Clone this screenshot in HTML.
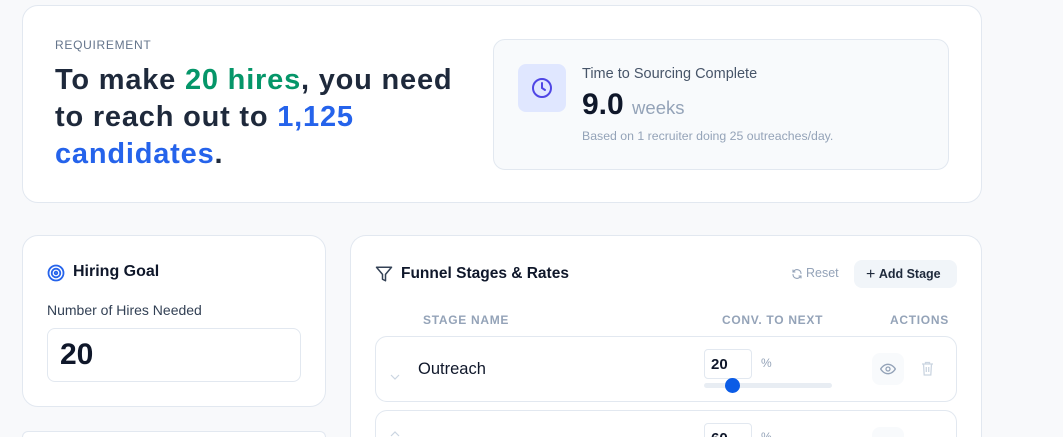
<!DOCTYPE html>
<html style="width:1063px;height:437px;overflow:hidden"><head><style>
*{box-sizing:border-box;margin:0;padding:0}
body{width:1063px;height:437px;overflow:hidden;background:#f8f9fb;font-family:"Liberation Sans",sans-serif;color:#0f172a;position:relative}
.card{position:absolute;background:#fff;border:1px solid #e2e8f0;border-radius:16px}
.abs{position:absolute;white-space:nowrap}
</style></head><body>
<div class="card" style="left:22px;top:5px;width:960px;height:198px"></div>
<div class="abs" style="left:55px;top:38px;font-size:12px;letter-spacing:0.7px;color:#64748b">REQUIREMENT</div>
<div class="abs" style="left:55px;top:62px;font-size:29px;letter-spacing:0.8px;font-weight:bold;line-height:37px;color:#1e293b">To make <span style="color:#059669">20 hires</span>, you need<br>to reach out to <span style="color:#2563eb">1,125</span><br><span style="color:#2563eb">candidates</span>.</div>
<div style="position:absolute;left:493px;top:39px;width:456px;height:131px;background:#f8fafc;border:1px solid #e2e8f0;border-radius:12px"></div>
<div style="position:absolute;left:518px;top:64px;width:48px;height:48px;background:#e0e7ff;border-radius:8px"></div>
<svg class="abs" style="left:530px;top:76px" width="24" height="24" viewBox="0 0 24 24" fill="none" stroke="#4f46e5" stroke-width="2" stroke-linecap="round"><circle cx="12" cy="12" r="9"/><path d="M12 7v5l3 2"/></svg>
<div class="abs" style="left:582px;top:66px;font-size:14.5px;color:#475569">Time to Sourcing Complete</div>
<div class="abs" style="left:582px;top:88px;font-size:30px;font-weight:bold;color:#0f172a">9.0 <span style="font-size:18.5px;font-weight:normal;color:#94a3b8">weeks</span></div>
<div class="abs" style="left:582px;top:129px;font-size:12.3px;color:#94a3b8">Based on 1 recruiter doing 25 outreaches/day.</div>

<div class="card" style="left:22px;top:235px;width:304px;height:172px"></div>
<svg class="abs" style="left:47px;top:264px" width="18" height="18" viewBox="0 0 18 18" fill="none" stroke="#2563eb" stroke-width="1.8"><circle cx="9" cy="9" r="7.5"/><circle cx="9" cy="9" r="4.3"/><circle cx="9" cy="9" r="1.3"/></svg>
<div class="abs" style="left:73px;top:263px;font-size:16px;font-weight:bold">Hiring Goal</div>
<div class="abs" style="left:47px;top:302px;font-size:14px;color:#334155">Number of Hires Needed</div>
<div style="position:absolute;left:47px;top:328px;width:254px;height:54px;border:1px solid #e2e8f0;border-radius:8px"></div>
<div class="abs" style="left:60px;top:338px;font-size:30px;font-weight:bold">20</div>
<div class="card" style="left:22px;top:431px;width:304px;height:6px;border-bottom:none;border-radius:16px 16px 0 0"></div>

<div class="card" style="left:350px;top:235px;width:632px;height:202px;border-bottom:none;border-radius:16px 16px 0 0"></div>
<svg class="abs" style="left:375px;top:265px" width="18" height="18" viewBox="0 0 24 24" fill="none" stroke="#334155" stroke-width="2" stroke-linejoin="round"><path d="M22 3H2l8 9.5V19l4 2v-8.5z"/></svg>
<div class="abs" style="left:401px;top:265px;font-size:15.5px;font-weight:bold">Funnel Stages &amp; Rates</div>
<svg class="abs" style="left:791px;top:268px" width="12" height="12" viewBox="0 0 24 24" fill="none" stroke="#94a3b8" stroke-width="2.2" stroke-linecap="round"><path d="M20 11a8 8 0 0 0-14-5l-2 2M4 4v4h4M4 13a8 8 0 0 0 14 5l2-2M20 20v-4h-4"/></svg>
<div class="abs" style="left:806px;top:266px;font-size:12.5px;color:#94a3b8">Reset</div>
<div style="position:absolute;left:854px;top:260px;width:103px;height:28px;background:#f1f5f9;border-radius:8px"></div>
<div class="abs" style="left:866px;top:265px;font-size:12.5px;font-weight:bold;color:#1e293b"><span style="font-size:16px;font-weight:normal;position:relative;top:1px">+</span>&nbsp;Add Stage</div>
<div class="abs" style="left:423px;top:313px;font-size:12px;font-weight:bold;color:#94a3b8;letter-spacing:0.7px">STAGE NAME</div>
<div class="abs" style="left:722px;top:313px;font-size:12px;font-weight:bold;color:#94a3b8;letter-spacing:0.7px">CONV. TO NEXT</div>
<div class="abs" style="left:890px;top:313px;font-size:12px;font-weight:bold;color:#94a3b8;letter-spacing:0.7px">ACTIONS</div>

<div style="position:absolute;left:375px;top:336px;width:582px;height:66px;border:1px solid #e2e8f0;border-radius:12px;background:#fff"></div>
<svg class="abs" style="left:390px;top:374px" width="10" height="6" viewBox="0 0 10 6" fill="none" stroke="#cbd5e1" stroke-width="1.2"><path d="M1 1l4 4 4-4"/></svg>
<div class="abs" style="left:418px;top:360px;font-size:16.5px">Outreach</div>
<div style="position:absolute;left:704px;top:349px;width:48px;height:30px;border:1px solid #e2e8f0;border-radius:4px"></div>
<div class="abs" style="left:711px;top:356px;font-size:15px;font-weight:bold">20</div>
<div class="abs" style="left:761px;top:356px;font-size:12px;color:#94a3b8">%</div>
<div style="position:absolute;left:704px;top:383px;width:128px;height:5px;background:#e8edf3;border-radius:3px"></div>
<div style="position:absolute;left:725px;top:378px;width:15px;height:15px;background:#0b5ce6;border-radius:50%"></div>
<div style="position:absolute;left:872px;top:353px;width:32px;height:32px;background:#f8fafc;border-radius:8px"></div>
<svg class="abs" style="left:880px;top:362px" width="16" height="14" viewBox="0 0 24 20" fill="none" stroke="#94a3b8" stroke-width="2"><path d="M1 10s4-7 11-7 11 7 11 7-4 7-11 7S1 10 1 10z"/><circle cx="12" cy="10" r="3"/></svg>
<svg class="abs" style="left:921px;top:361px" width="13" height="15" viewBox="0 0 13 15" fill="none" stroke="#cbd5e1" stroke-width="1.3"><path d="M1 3h11M4.5 3V1.5h4V3M2.5 3l.7 11h6.6l.7-11M5.3 6v5M7.7 6v5"/></svg>

<div style="position:absolute;left:375px;top:410px;width:582px;height:27px;border:1px solid #e2e8f0;border-bottom:none;border-radius:12px 12px 0 0;background:#fff;overflow:hidden">
<svg style="position:absolute;left:14px;top:20px" width="10" height="6" viewBox="0 0 10 6" fill="none" stroke="#cbd5e1" stroke-width="1.2"><path d="M1 5l4-4 4 4"/></svg>
<div style="position:absolute;left:328px;top:12px;width:48px;height:30px;border:1px solid #e2e8f0;border-radius:4px"></div>
<div style="position:absolute;left:335px;top:19px;font-size:15px;font-weight:bold">60</div>
<div style="position:absolute;left:385px;top:19px;font-size:12px;color:#94a3b8">%</div>
<div style="position:absolute;left:496px;top:16px;width:32px;height:32px;background:#f8fafc;border-radius:8px"></div>
</div>
</body></html>
